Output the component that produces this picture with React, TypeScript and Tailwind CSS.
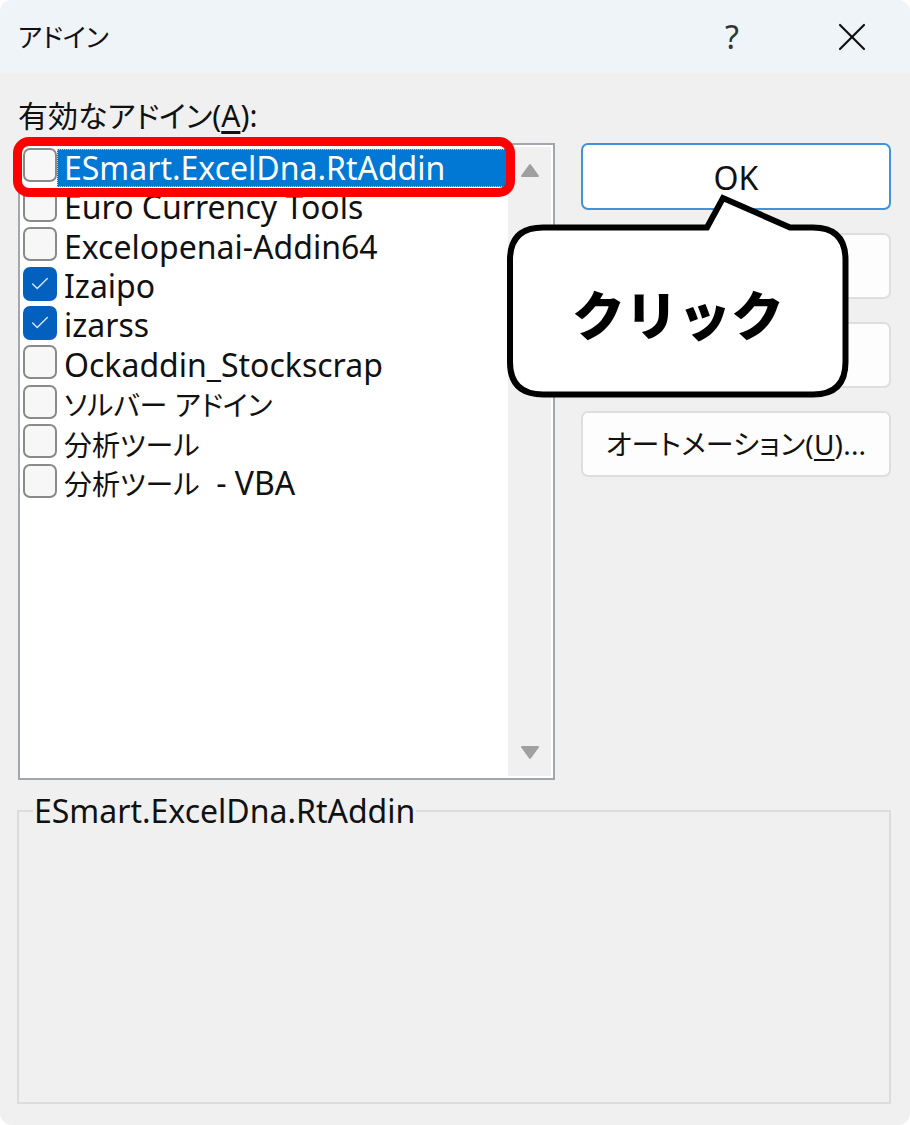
import { Check, X } from "lucide-react"

const ADDINS = [
  { name: "ESmart.ExcelDna.RtAddin", checked: false, selected: true },
  { name: "Euro Currency Tools", checked: false },
  { name: "Excelopenai-Addin64", checked: false },
  { name: "Izaipo", checked: true },
  { name: "izarss", checked: true },
  { name: "Ockaddin_Stockscrap", checked: false },
  { jp: "ソルバー アドイン", name: "", checked: false },
  { jp: "分析ツール", name: "", checked: false },
  { jp: "分析ツール", name: "  - VBA", checked: false },
]

const FONT = "font-['Noto_Sans','Noto_Sans_CJK_JP',sans-serif] [font-feature-settings:'palt']"

function AddinRow({ name, jp, checked, selected }: { name: string; jp?: string; checked: boolean; selected?: boolean }) {
  return (
    <div className="flex h-[39.45px] items-center pl-[3px]">
      {checked ? (
        <div className="mb-[5px] flex h-[34px] w-[34px] shrink-0 items-center justify-center rounded-[7px] bg-[#0460bf]">
          <Check className="h-[22px] w-[22px] text-[#dbe8f6]" strokeWidth={1.5} />
        </div>
      ) : (
        <div className="mb-[5px] h-[34px] w-[34px] shrink-0 rounded-[7px] border-2 border-[#8a8a8a] bg-[#f7f7f7]" />
      )}
      <div
        className={
          selected
            ? "flex h-[38px] flex-1 items-center border border-dotted border-[#d9cfa8] bg-[#0078d4] pl-[6px] text-white"
            : "flex h-[38px] flex-1 items-center border border-transparent pl-[6px] text-[#111]"
        }
      >
        <span className="whitespace-pre">
          {jp && <span className="text-[28px]">{jp}</span>}
          {name}
        </span>
      </div>
    </div>
  )
}

function DialogButton({ children, focused }: { children?: React.ReactNode; focused?: boolean }) {
  return (
    <div
      className={
        focused
          ? "flex h-[67px] items-center justify-center rounded-[7px] border-2 border-[#3f93d8] bg-white text-[#111]"
          : "flex h-[66px] items-center justify-center rounded-[7px] border-2 border-[#dedede] bg-[#fdfdfd] text-[#111]"
      }
    >
      {children}
    </div>
  )
}

export default function App() {
  return (
    <div className={`relative h-[1125px] w-[910px] overflow-hidden rounded-[12px] bg-[#f0f0f0] text-[32px] leading-none ${FONT}`}>
      {/* Title bar */}
      <div className="flex h-[73px] items-center justify-between bg-[#eff4f9] pl-[18px] pr-[34px] text-[#111]">
        <span className="text-[26px]">アドイン</span>
        <div className="flex items-center gap-[89px]">
          <span className="text-[32px] text-[#333]">?</span>
          <X className="h-[48px] w-[48px]" strokeWidth={1.1} />
        </div>
      </div>

      <div className="flex flex-col pl-[18px] pr-[19px]">
        <div className="mt-[28px] h-[42px] text-[30px] text-[#111]">
          有効なアドイン(<span className="underline underline-offset-4">A</span>):
        </div>

        <div className="flex gap-[26px]">
          {/* List */}
          <div className="flex h-[637px] w-[537px] border-2 border-[#a3a6ad] bg-white">
            <div className="flex-1 pt-[3px]">
              {ADDINS.map((a, i) => (
                <AddinRow key={i} {...a} />
              ))}
            </div>
            <div className="my-[2px] mr-[2px] flex w-[43px] flex-col items-center justify-between bg-[#f0f0f0] py-[16px] text-[#a0a0a0]">
              <svg width="20" height="15" viewBox="0 0 20 15" fill="currentColor" stroke="currentColor" strokeWidth="2" strokeLinejoin="round">
                <path d="M10 2 18 13H2Z" />
              </svg>
              <svg width="20" height="15" viewBox="0 0 20 15" fill="currentColor" stroke="currentColor" strokeWidth="2" strokeLinejoin="round">
                <path d="M2 2H18L10 13Z" />
              </svg>
            </div>
          </div>

          {/* Buttons */}
          <div className="flex w-[310px] flex-col gap-[23px]">
            <DialogButton focused>
              <span className="pt-[2px]">OK</span>
            </DialogButton>
            <DialogButton />
            <DialogButton />
            <DialogButton>
              <span className="text-[28px] tracking-[0.2px]">
                オートメーション(<span className="underline underline-offset-4">U</span>)...
              </span>
            </DialogButton>
          </div>
        </div>

        {/* Description group */}
        <div className="relative ml-[-1px] mt-[30px] h-[294px] border-2 border-[#dcdcdc]">
          <span className="absolute left-[14px] top-[-17px] bg-[#f0f0f0] px-[1px] text-[#111]">ESmart.ExcelDna.RtAddin</span>
        </div>
      </div>

      {/* Red highlight over the first row */}
      <div className="absolute left-[13px] top-[137px] h-[60px] w-[502px] rounded-[16px] border-[9px] border-[#ff0000]" />

      {/* Callout */}
      <svg className="absolute left-[500px] top-[185px]" width="360" height="220" viewBox="0 0 360 220" fill="none">
        <path
          d="M43 42.5H207L223 13L290 42.5H313Q345.5 42.5 345.5 75V177Q345.5 209.5 313 209.5H43Q10 209.5 10 177V75Q10 42.5 43 42.5Z"
          fill="white"
          stroke="black"
          strokeWidth="6"
        />
      </svg>
      <div className="absolute left-[508px] top-[229px] flex h-[169px] w-[340px] items-center justify-center font-['Noto_Sans_CJK_JP',sans-serif] text-[53px] font-black text-black [font-feature-settings:normal]">
        クリック
      </div>
    </div>
  )
}
